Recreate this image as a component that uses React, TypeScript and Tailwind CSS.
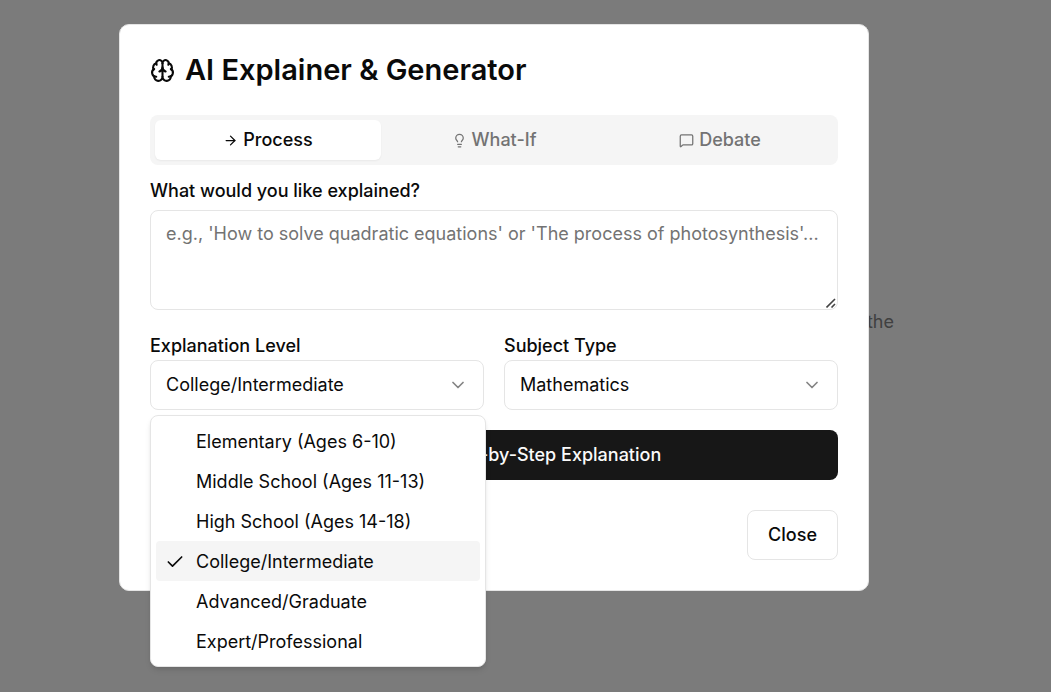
import React, { useState } from 'react';
import { ArrowRight, Brain, Check, ChevronDown, Lightbulb, MessageSquare, Sparkles } from 'lucide-react';
import { clsx } from 'clsx';

const levels = [
  'Elementary (Ages 6-10)',
  'Middle School (Ages 11-13)',
  'High School (Ages 14-18)',
  'College/Intermediate',
  'Advanced/Graduate',
  'Expert/Professional',
];

const subjects = ['Mathematics', 'Science', 'History', 'Literature', 'Technology'];

const tabs = [
  { id: 'process', label: 'Process', icon: ArrowRight },
  { id: 'what-if', label: 'What-If', icon: Lightbulb },
  { id: 'debate', label: 'Debate', icon: MessageSquare },
];

const selectClass =
  'h-[50px] w-full appearance-none rounded-lg border border-neutral-200 bg-white px-[15px] outline-none';

const SelectArrow = () => (
  <ChevronDown
    strokeWidth={2}
    className="pointer-events-none absolute right-4 top-[15px] h-5 w-5 opacity-50"
  />
);

export default function App() {
  const [tab, setTab] = useState('process');
  const [level, setLevel] = useState('College/Intermediate');
  const [subject, setSubject] = useState('Mathematics');
  const [levelOpen, setLevelOpen] = useState(true);

  return (
    <div className="min-h-screen bg-[#7b7b7b] font-['Inter',sans-serif] text-[18px] leading-[28px] text-neutral-950">
      {/* page text behind the dialog */}
      <p className="absolute right-[157px] top-[308px] text-[#404040]">the</p>

      <div className="flex justify-center pb-6 pl-4 pr-[79px] pt-6">
        <section
          role="dialog"
          aria-labelledby="dialog-title"
          className="relative w-full max-w-[750px] rounded-[10px] border border-neutral-200 bg-white p-[30px]"
        >
          <h2 id="dialog-title" className="flex items-center gap-[10px] text-[29px] font-semibold leading-[30px]">
            <Brain className="h-[25px] w-[25px]" />
            AI Explainer &amp; Generator
          </h2>

          <div role="tablist" className="mt-[30px] grid grid-cols-3 rounded-lg bg-neutral-100 p-[5px]">
            {tabs.map(({ id, label, icon: Icon }) => (
              <button
                key={id}
                role="tab"
                aria-selected={tab === id}
                onClick={() => setTab(id)}
                className={clsx(
                  'flex h-10 items-center justify-center gap-[5px] rounded-md font-medium',
                  tab === id ? 'bg-white shadow-xs' : 'text-neutral-500'
                )}
              >
                <Icon className="h-[15px] w-[15px]" />
                {label}
              </button>
            ))}
          </div>

          <label htmlFor="topic" className="mt-3 block font-medium">
            What would you like explained?
          </label>
          <div className="relative mt-[5px]">
            <textarea
              id="topic"
              placeholder="e.g., 'How to solve quadratic equations' or 'The process of photosynthesis'..."
              className="block h-[100px] w-full rounded-lg border border-neutral-200 px-[15px] py-[9px] outline-none placeholder:text-neutral-500 [&::-webkit-resizer]:bg-transparent"
            />
            <svg
              viewBox="0 0 10 10"
              stroke="#444"
              strokeWidth="1.6"
              className="pointer-events-none absolute bottom-[2px] right-[2px] h-[10px] w-[10px]"
            >
              <path d="M0.5 9.5 9 1M5.5 9.5 9 6" />
            </svg>
          </div>

          <div className="mt-[22px] grid grid-cols-2 gap-5">
            <div>
              <label htmlFor="level" className="block font-medium">
                Explanation Level
              </label>
              <div className="relative">
                <select
                  id="level"
                  value={level}
                  onChange={(e) => setLevel(e.target.value)}
                  onMouseDown={(e) => {
                    e.preventDefault();
                    setLevelOpen(!levelOpen);
                  }}
                  className={selectClass}
                >
                  {levels.map((item) => (
                    <option key={item}>{item}</option>
                  ))}
                </select>
                <SelectArrow />
                {levelOpen && (
                  <ul
                    role="listbox"
                    aria-label="Explanation Level"
                    className="absolute left-0 top-[55px] z-10 w-[calc(100%+2px)] rounded-lg border border-neutral-200 bg-white p-[5px] shadow-md"
                  >
                    {levels.map((item) => (
                      <li
                        key={item}
                        role="option"
                        aria-selected={item === level}
                        onClick={() => {
                          setLevel(item);
                          setLevelOpen(false);
                        }}
                        className={clsx(
                          'flex cursor-default items-center gap-[11px] rounded pb-[5px] pl-[9px] pt-[7px]',
                          item === level && 'bg-neutral-100'
                        )}
                      >
                        <Check className={clsx('h-5 w-5', item !== level && 'invisible')} />
                        {item}
                      </li>
                    ))}
                  </ul>
                )}
              </div>
            </div>

            <div>
              <label htmlFor="subject" className="block font-medium">
                Subject Type
              </label>
              <div className="relative">
                <select
                  id="subject"
                  value={subject}
                  onChange={(e) => setSubject(e.target.value)}
                  className={selectClass}
                >
                  {subjects.map((item) => (
                    <option key={item}>{item}</option>
                  ))}
                </select>
                <SelectArrow />
              </div>
            </div>
          </div>

          <button className="mt-5 flex h-[50px] w-full items-center justify-center gap-[10px] rounded-lg bg-neutral-900 font-medium text-neutral-50">
            <Sparkles className="h-5 w-5" />
            Generate Step-by-Step Explanation
          </button>

          <div className="mt-[30px] flex justify-end">
            <button className="h-[50px] rounded-lg border border-neutral-200 px-5 font-medium">Close</button>
          </div>
        </section>
      </div>
    </div>
  );
}
